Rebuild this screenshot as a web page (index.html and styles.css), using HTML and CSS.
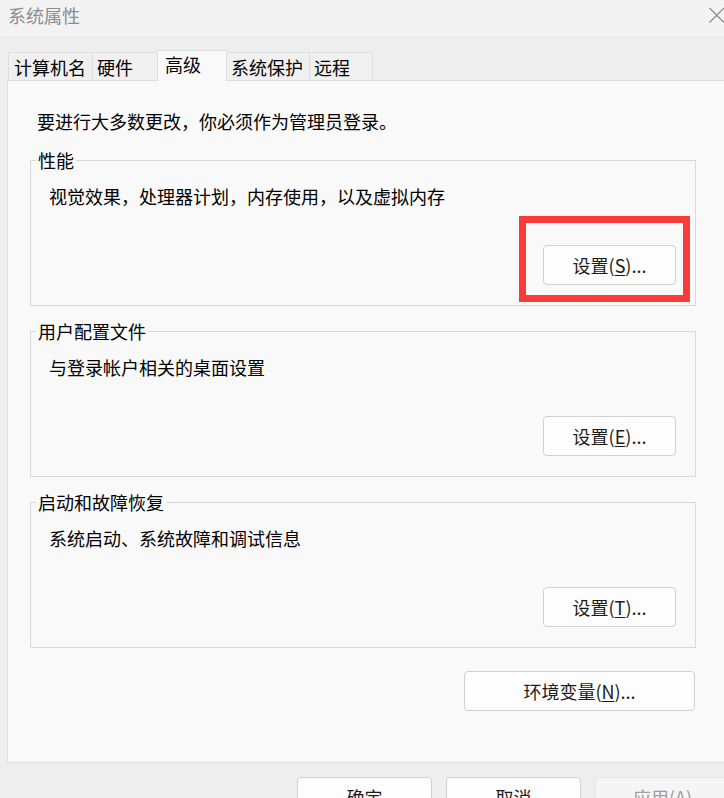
FILE: index.html
```html
<!DOCTYPE html>
<html lang="zh-CN">
<head>
    <meta charset="UTF-8">
    <meta name="viewport" content="width=device-width, initial-scale=1.0">
    <title>系统属性</title>
    <link rel="stylesheet" href="styles.css">
</head>
<body>
    <div class="dialog">
        <div class="titlebar">
            <span class="title">系统属性</span>
            <svg class="close" width="15" height="16" viewBox="0 0 15 16">
                <path d="M0.5 1 L15 15.5 M15 1 L0.5 15.5" stroke="#8a8a8a" stroke-width="1.2" fill="none"/>
            </svg>
        </div>

        <div class="tabs">
            <div class="tab">计算机名</div>
            <div class="tab">硬件</div>
            <div class="tab active">高级</div>
            <div class="tab">系统保护</div>
            <div class="tab">远程</div>
        </div>

        <div class="panel">
            <p class="intro">要进行大多数更改，你必须作为管理员登录。</p>

            <fieldset class="group">
                <legend>性能</legend>
                <p class="desc">视觉效果，处理器计划，内存使用，以及虚拟内存</p>
                <div class="actions">
                    <span class="marked">
                        <button class="btn">设置(<u>S</u>)...</button>
                        <span class="highlight"></span>
                    </span>
                </div>
            </fieldset>

            <fieldset class="group">
                <legend>用户配置文件</legend>
                <p class="desc">与登录帐户相关的桌面设置</p>
                <div class="actions">
                    <button class="btn">设置(<u>E</u>)...</button>
                </div>
            </fieldset>

            <fieldset class="group">
                <legend>启动和故障恢复</legend>
                <p class="desc">系统启动、系统故障和调试信息</p>
                <div class="actions">
                    <button class="btn">设置(<u>T</u>)...</button>
                </div>
            </fieldset>

            <div class="env-row">
                <button class="btn wide">环境变量(<u>N</u>)...</button>
            </div>
        </div>

        <div class="footer">
            <button class="btn big">确定</button>
            <button class="btn big">取消</button>
            <button class="btn big" disabled>应用(<u>A</u>)</button>
        </div>
    </div>
</body>
</html>
```

FILE: styles.css
```css
html, body {
    margin: 0;
    padding: 0;
    overflow: hidden;
    background: #eeeeee;
}
body {
    width: 724px;
    height: 798px;
    font-family: "Noto Sans CJK SC", "Noto Sans", sans-serif;
    font-size: 18px;
    line-height: 24px;
    color: #000;
}
.dialog {
    width: 742px;
}
.titlebar {
    height: 36px;
    box-sizing: border-box;
    padding: 3px 0 0 8px;
    background: #f3f3f3;
    display: flex;
    justify-content: space-between;
    align-items: flex-start;
    width: 724px;
}
.title {
    color: #8c8c8c;
}
.close {
    margin-top: 4px;
}
.tabs {
    display: flex;
    align-items: flex-end;
    padding: 14px 0 0 8px;
    height: 30px;
}
.tab {
    box-sizing: border-box;
    height: 28px;
    line-height: 28px;
    padding-left: 4px;
    border: 1px solid #dedede;
    border-bottom: none;
    margin-left: -1px;
    background: #f0f0f0;
    white-space: nowrap;
}
.tab:first-child {
    margin-left: 0;
    width: 85px;
    padding-left: 5px;
}
.tab:nth-child(2) { width: 66px; }
.tab:nth-child(4) { width: 84px; }
.tab:nth-child(5) { width: 64px; }
.tab.active {
    width: 70px;
    height: 31px;
    line-height: 26px;
    padding-left: 7px;
    margin-bottom: -1px;
    background: #f9f9f9;
    position: relative;
    z-index: 1;
}
.panel {
    box-sizing: border-box;
    height: 683px;
    margin: 0 12px 0 7px;
    border: 1px solid #dedede;
    background: #f9f9f9;
    padding: 28px 0 0 22px;
}
.intro {
    margin: 0 0 15px 7px;
}
.group {
    width: 666px;
    box-sizing: border-box;
    margin: 0 0 13px 0;
    padding: 12px 19px 20px 5px;
    border: 1px solid #d9d9d9;
    min-width: 0;
}
.group legend {
    padding: 0 2px;
}
.desc {
    margin: 0 0 0 13px;
}
.actions {
    display: flex;
    justify-content: flex-end;
    margin-top: 37px;
}
.marked {
    position: relative;
    display: flex;
}
.highlight {
    position: absolute;
    top: -29px;
    left: -24px;
    right: -14px;
    bottom: -17px;
    border: 7px solid #fb3a3a;
}
.btn {
    box-sizing: border-box;
    width: 133px;
    height: 40px;
    border: 1px solid #d0d0d0;
    border-radius: 4px;
    background: #fdfdfd;
    font-family: inherit;
    font-size: 18px;
    color: #1b1b1b;
    padding: 0;
}
.btn u {
    text-underline-offset: 2px;
}
.env-row {
    width: 665px;
    display: flex;
    justify-content: flex-end;
    margin-top: 23px;
}
.btn.wide {
    width: 231px;
}
.footer {
    display: flex;
    justify-content: flex-end;
    gap: 14px;
    padding-right: 12px;
    margin-top: 14px;
}
.btn.big {
    width: 135px;
}
.btn:disabled {
    background: #f5f5f5;
    border-color: #e5e5e5;
    color: #9d9d9d;
}
```
